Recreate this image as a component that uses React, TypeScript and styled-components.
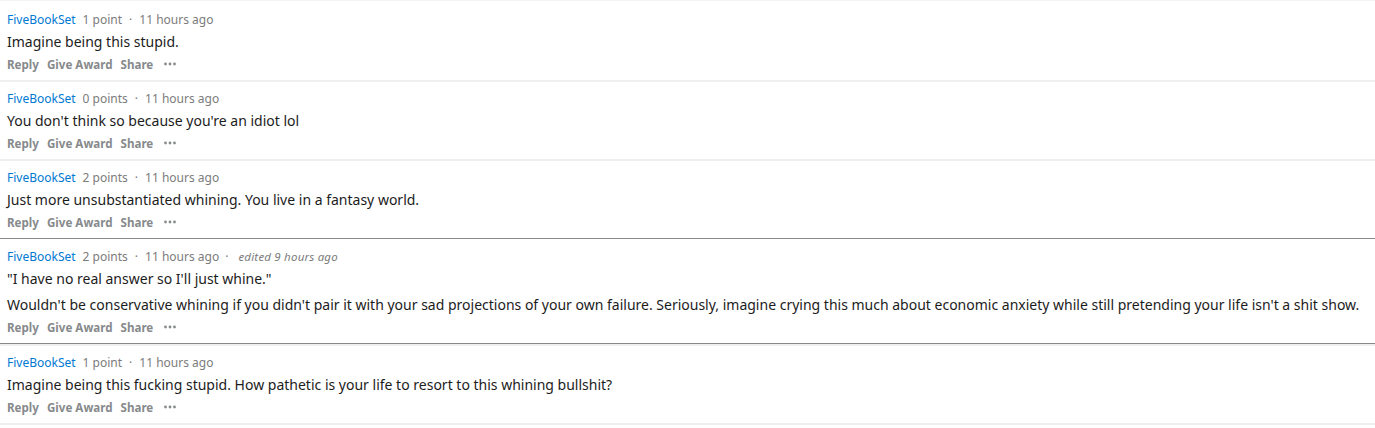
import React from 'react';
import styled, { createGlobalStyle } from 'styled-components';

type Divider = 'light' | 'dark' | 'both';

interface CommentData {
  author: string;
  points: string;
  time: string;
  edited?: string;
  body: string[];
  divider: Divider;
}

const comments: CommentData[] = [
  {
    author: 'FiveBookSet',
    points: '1 point',
    time: '11 hours ago',
    body: ['Imagine being this stupid.'],
    divider: 'light',
  },
  {
    author: 'FiveBookSet',
    points: '0 points',
    time: '11 hours ago',
    body: ["You don't think so because you're an idiot lol"],
    divider: 'light',
  },
  {
    author: 'FiveBookSet',
    points: '2 points',
    time: '11 hours ago',
    body: ['Just more unsubstantiated whining. You live in a fantasy world.'],
    divider: 'dark',
  },
  {
    author: 'FiveBookSet',
    points: '2 points',
    time: '11 hours ago',
    edited: 'edited 9 hours ago',
    body: [
      '"I have no real answer so I\'ll just whine."',
      "Wouldn't be conservative whining if you didn't pair it with your sad projections of your own failure. Seriously, imagine crying this much about economic anxiety while still pretending your life isn't a shit show.",
    ],
    divider: 'both',
  },
  {
    author: 'FiveBookSet',
    points: '1 point',
    time: '11 hours ago',
    body: [
      'Imagine being this fucking stupid. How pathetic is your life to resort to this whining bullshit?',
    ],
    divider: 'light',
  },
];

const MoreIcon = () => (
  <svg width="12" height="4" viewBox="0 0 12 4" fill="#878a8c">
    <circle cx="1.5" cy="2" r="1.4" />
    <circle cx="6" cy="2" r="1.4" />
    <circle cx="10.5" cy="2" r="1.4" />
  </svg>
);

const App: React.FC = () => {
  return (
    <>
      <GlobalStyle />
      <List>
        {comments.map((c, i) => (
          <Comment key={i} divider={c.divider}>
            <Meta>
              <Author>{c.author}</Author>
              <MetaText>{c.points}</MetaText>
              <Dot>·</Dot>
              <MetaText>{c.time}</MetaText>
              {c.edited && (
                <>
                  <Dot wide>·</Dot>
                  <Edited>{c.edited}</Edited>
                </>
              )}
            </Meta>
            <Body>
              {c.body.map((p, j) => (
                <Paragraph key={j}>{p}</Paragraph>
              ))}
            </Body>
            <Actions>
              <ActionButton>Reply</ActionButton>
              <ActionButton>Give Award</ActionButton>
              <ActionButton>Share</ActionButton>
              <MoreButton>
                <MoreIcon />
              </MoreButton>
            </Actions>
          </Comment>
        ))}
      </List>
    </>
  );
};

export default App;

/* ----------------------- */
/* Styled Components       */
/* ----------------------- */

const GlobalStyle = createGlobalStyle`
  html, body {
    margin: 0;
    padding: 0;
    background: #ffffff;
  }
  body {
    font-family: "Noto Sans", "Liberation Sans", sans-serif;
  }
`;

const List = styled.div`
  width: 1375px;
  border-top: 1px solid #f4f4f4;
  padding-top: 2px;
`;

const Comment = styled.div<{ divider: Divider }>`
  padding: 7px 0 4px 7px;
  border-bottom: ${({ divider }) =>
    divider === 'light' ? '2px solid #edeff1' : '1px solid #878a8c'};
  box-shadow: ${({ divider }) =>
    divider === 'both' ? '0 2px 0 #edeff1' : 'none'};
  margin-bottom: ${({ divider }) =>
    divider === 'both' ? '2px' : divider === 'dark' ? '1px' : '0'};
`;

const Meta = styled.div`
  display: flex;
  align-items: center;
  height: 18px;
  font-size: 12px;
  color: #7c7c7c;
`;

const Author = styled.span`
  color: #0079d3;
  margin-right: 7px;
`;

const MetaText = styled.span``;

const Dot = styled.span<{ wide?: boolean }>`
  margin: ${({ wide }) => (wide ? '0 10px 0 6px' : '0 7px 0 7px')};
  color: #7c7c7c;
`;

const Edited = styled.span`
  font-style: italic;
  font-size: 11.5px;
  letter-spacing: 0.2px;
`;

const Body = styled.div`
  margin-top: 3px;
  display: flex;
  flex-direction: column;
  gap: 5px;
`;

const Paragraph = styled.p`
  margin: 0;
  font-size: 14px;
  line-height: 21px;
  color: #1c1c1c;
`;

const Actions = styled.div`
  display: flex;
  align-items: center;
  height: 24px;
  gap: 8px;
`;

const ActionButton = styled.span`
  font-size: 11.6px;
  font-weight: 700;
  color: #878a8c;
`;

const MoreButton = styled.span`
  display: flex;
  align-items: center;
  margin-left: 3px;
`;
